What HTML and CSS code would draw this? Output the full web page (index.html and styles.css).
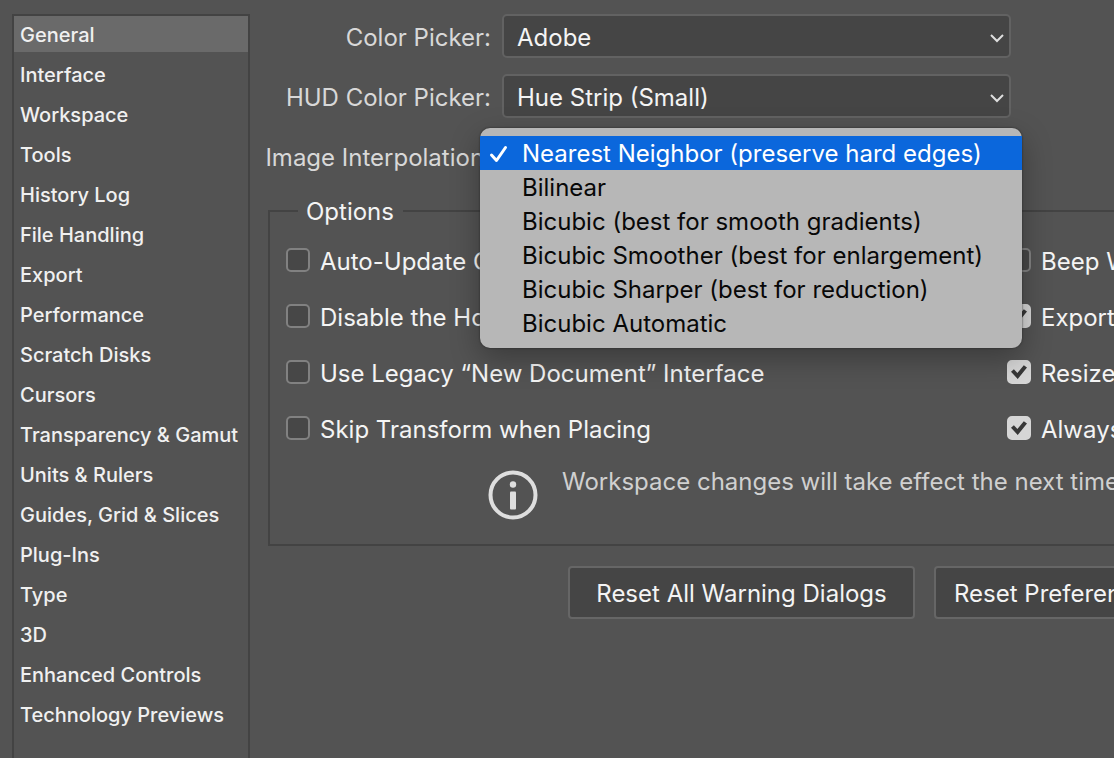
FILE: index.html
```html
<!DOCTYPE html>
<html lang="en">
<head>
<meta charset="utf-8">
<title>Preferences</title>
<link rel="stylesheet" href="styles.css">
</head>
<body>
<div class="dialog">
  <nav class="sidebar" aria-label="Preference sections">
    <button class="section selected" type="button">General</button>
    <button class="section" type="button">Interface</button>
    <button class="section" type="button">Workspace</button>
    <button class="section" type="button">Tools</button>
    <button class="section" type="button">History Log</button>
    <button class="section" type="button">File Handling</button>
    <button class="section" type="button">Export</button>
    <button class="section" type="button">Performance</button>
    <button class="section" type="button">Scratch Disks</button>
    <button class="section" type="button">Cursors</button>
    <button class="section" type="button">Transparency &amp; Gamut</button>
    <button class="section" type="button">Units &amp; Rulers</button>
    <button class="section" type="button">Guides, Grid &amp; Slices</button>
    <button class="section" type="button">Plug-Ins</button>
    <button class="section" type="button">Type</button>
    <button class="section" type="button">3D</button>
    <button class="section" type="button">Enhanced Controls</button>
    <button class="section" type="button">Technology Previews</button>
  </nav>
  <main class="panel">
    <div class="fields">
      <label class="field-label" for="picker">Color Picker:</label>
      <div class="field">
        <select class="select" id="picker"><option>Adobe</option></select>
        <svg class="chevron" viewBox="0 0 14 10" aria-hidden="true"><path d="M1 2l6 6 6-6"/></svg>
      </div>
      <label class="field-label" for="hud">HUD Color Picker:</label>
      <div class="field">
        <select class="select" id="hud"><option>Hue Strip (Small)</option></select>
        <svg class="chevron" viewBox="0 0 14 10" aria-hidden="true"><path d="M1 2l6 6 6-6"/></svg>
      </div>
      <label class="field-label" for="interpolation">Image Interpolation:</label>
      <div class="field">
        <button class="select" id="interpolation" type="button" aria-haspopup="listbox" aria-expanded="true"></button>
        <div class="menu" role="listbox" aria-label="Image Interpolation">
          <button class="item active" type="button" role="option" aria-selected="true">
            <svg class="tick" viewBox="0 0 20 18" aria-hidden="true"><path d="M2.500 10l5 5.500L16.500 2.500"/></svg>Nearest Neighbor (preserve hard edges)</button>
          <button class="item" type="button" role="option">Bilinear</button>
          <button class="item" type="button" role="option">Bicubic (best for smooth gradients)</button>
          <button class="item" type="button" role="option">Bicubic Smoother (best for enlargement)</button>
          <button class="item" type="button" role="option">Bicubic Sharper (best for reduction)</button>
          <button class="item" type="button" role="option">Bicubic Automatic</button>
        </div>
      </div>
    </div>
    <fieldset class="options">
      <legend class="legend">Options</legend>
      <div class="checks">
        <label class="check"><input class="box" type="checkbox">Auto-Update Open Documents</label>
        <label class="check"><input class="box" type="checkbox">Beep When Done</label>
        <label class="check"><input class="box" type="checkbox">Disable the Home Screen</label>
        <label class="check"><input class="box" type="checkbox" checked>Export Clipboard</label>
        <label class="check"><input class="box" type="checkbox">Use Legacy “New Document” Interface</label>
        <label class="check"><input class="box" type="checkbox" checked>Resize Image During Place</label>
        <label class="check"><input class="box" type="checkbox">Skip Transform when Placing</label>
        <label class="check"><input class="box" type="checkbox" checked>Always Create Smart Objects when Placing</label>
      </div>
      <div class="notice">
        <svg class="info" viewBox="0 0 50 50" aria-hidden="true">
          <circle class="ring" cx="25" cy="25" r="22.500"/>
          <circle class="mark" cx="25" cy="14.500" r="3.200"/>
          <rect class="mark" x="22" y="21.500" width="6" height="18" rx="1"/>
        </svg>
        <p class="message">Workspace changes will take effect the next time you start Photoshop.</p>
      </div>
    </fieldset>
    <div class="actions">
      <button class="action wide" type="button">Reset All Warning Dialogs</button>
      <button class="action" type="button">Reset Preferences on Quit</button>
    </div>
  </main>
</div>
</body>
</html>
```
FILE: styles.css
```css
* {
  box-sizing: border-box;
}

body {
  margin: 0;
  overflow: hidden;
  background: #535353;
  color: #f4f4f4;
  font: 400 24px/28px Inter, "Liberation Sans", sans-serif;
}

button,
select {
  font: inherit;
  color: inherit;
  margin: 0;
}

.dialog {
  display: flex;
  gap: 18px;
  min-height: 100vh;
  padding: 14px 0 0 12px;
}

.sidebar {
  display: flex;
  flex: none;
  flex-direction: column;
  gap: 4px;
  width: 238px;
  border: 2px solid #434343;
  border-bottom: 0;
}

.section {
  height: 36px;
  padding: 2px 6px 0;
  border: 0;
  background: none;
  color: #f0f0f0;
  font-size: 20px;
  font-weight: 500;
  text-align: left;
  white-space: nowrap;
}

.section.selected {
  background: #6a6a6a;
}

.panel {
  flex: 1;
  min-width: 0;
}

.fields {
  display: grid;
  grid-template-columns: 223px minmax(0, 509px);
  gap: 16px 11px;
  margin-right: 103px;
  align-items: center;
}

.field-label {
  display: flex;
  justify-content: flex-end;
  padding-top: 4px;
  color: #d8d8d8;
  white-space: nowrap;
}

.field {
  position: relative;
  display: flex;
}

.select {
  appearance: none;
  width: 100%;
  height: 44px;
  padding: 4px 13px 0;
  border: 2px solid #626262;
  border-radius: 5px;
  background: #454545;
}

.chevron {
  position: absolute;
  right: 7px;
  top: 19px;
  width: 14px;
  height: 10px;
  fill: none;
  stroke: #dedede;
  stroke-width: 2;
}

.menu {
  position: absolute;
  z-index: 1;
  top: -6px;
  left: -22px;
  right: -11px;
  display: flex;
  flex-direction: column;
  padding: 8px 0;
  border-radius: 10px;
  background: #b7b7b7;
  color: #080808;
  box-shadow: 0 0 2px #222, 0 10px 30px rgba(0, 0, 0, 0.3);
}

.item {
  position: relative;
  height: 34px;
  padding: 2px 42px 0;
  border: 0;
  background: none;
  text-align: left;
  white-space: nowrap;
}

.item.active {
  background: #0b67dc;
  color: #fff;
}

.tick {
  position: absolute;
  left: 9px;
  top: 9px;
  width: 20px;
  height: 18px;
  fill: none;
  stroke: #fff;
  stroke-width: 3;
  stroke-linecap: round;
  stroke-linejoin: round;
}

.options {
  min-width: 0;
  margin: 18px -20px 0 0;
  padding: 22px 16px 24px;
  border: 2px solid #434343;
}

.legend {
  margin-left: 12px;
  padding: 2px 9px 0 8px;
}

.checks {
  display: grid;
  grid-template-columns: 721px 1fr;
  gap: 28px 0;
}

.check {
  display: flex;
  align-items: center;
  gap: 10px;
  min-width: 0;
  white-space: nowrap;
}

.box {
  appearance: none;
  display: grid;
  place-items: center;
  flex: none;
  width: 24px;
  height: 24px;
  margin: 0 0 4px;
  border: 2px solid #818181;
  border-radius: 5px;
  background: #474747;
}

.box:checked {
  border-color: #d6d6d6;
  background: #d6d6d6;
}

.box:checked::before {
  content: "";
  width: 16px;
  height: 14px;
  background: #383838;
  clip-path: polygon(0 48%, 18% 30%, 40% 58%, 80% 2%, 100% 18%, 42% 100%);
}

.notice {
  display: flex;
  gap: 24px;
  margin: 24px 0 0 202px;
}

.info {
  flex: none;
  width: 50px;
  height: 50px;
  margin-top: 2px;
}

.ring {
  fill: none;
  stroke: #dedede;
  stroke-width: 4;
}

.mark {
  fill: #dedede;
}

.message {
  margin: 0;
  color: #d0d0d0;
  white-space: nowrap;
}

.actions {
  display: flex;
  gap: 19px;
  margin: 20px 0 0 300px;
}

.action {
  flex: none;
  height: 53px;
  padding: 2px 18px 0;
  border: 2px solid #666;
  border-radius: 4px;
  background: #454545;
  white-space: nowrap;
}

.action.wide {
  min-width: 347px;
}
```
